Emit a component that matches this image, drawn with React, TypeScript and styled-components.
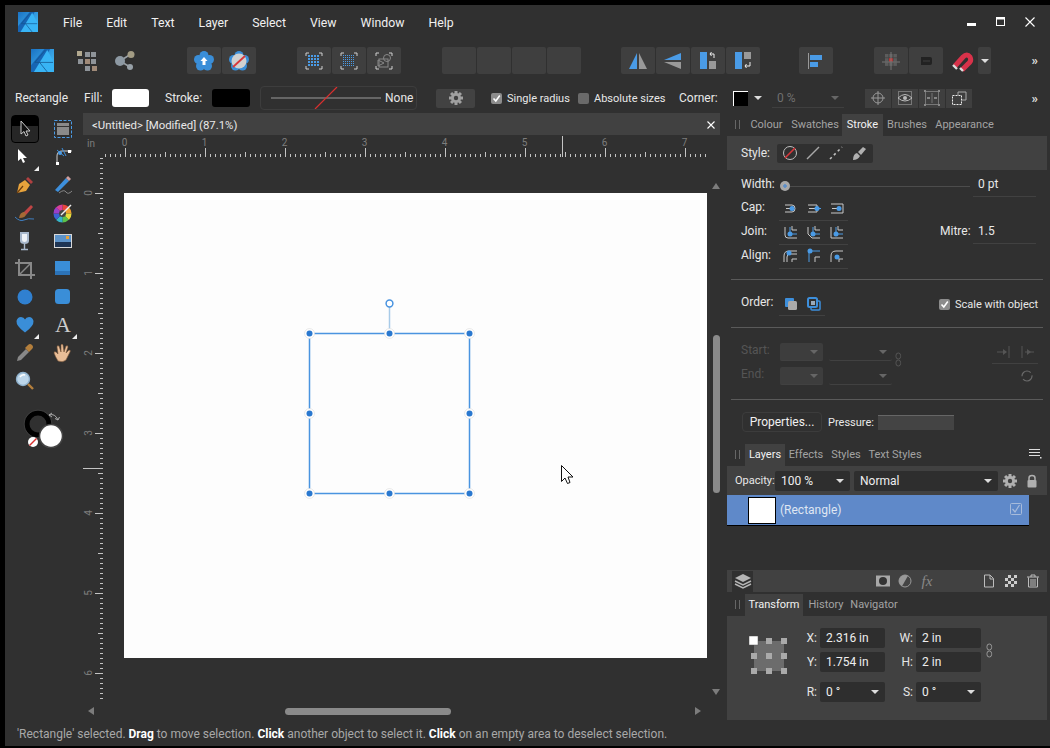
import React from "react";
import styled, { createGlobalStyle } from "styled-components";

const Global = createGlobalStyle`
  html, body { margin: 0; padding: 0; background: #000; overflow: hidden; }
  body { font-family: Roboto, "Liberation Sans", sans-serif; font-size: 12px; color: #e6e6e6; }
  * { box-sizing: border-box; }
`;

const Screen = styled.div`
  width: 1050px;
  height: 748px;
  padding: 5px 0 2px 5px;
  background: #000;
`;
const Frame = styled.div`
  height: 741px;
  display: flex;
  flex-direction: column;
  background: #303030;
`;

const TitleBar = styled.header`
  height: 39px;
  flex: none;
  display: flex;
  align-items: center;
  padding: 0 15px 6px 13px;
`;
const Menu = styled.nav`
  display: flex;
  gap: 24px;
  margin: 3px 0 0 25px;
  font-size: 12.3px;
  color: #f0f0f0;
`;
const WindowControls = styled.div`
  margin-left: auto;
  display: flex;
  gap: 19px;
  align-items: center;
`;

const Toolbar = styled.div`
  height: 36px;
  flex: none;
  display: flex;
  align-items: flex-start;
  padding-top: 3px;
`;
const Slot = styled.div<{ $ml?: number; $w?: number; $h?: number }>`
  margin-left: ${({ $ml }) => $ml ?? 0}px;
  width: ${({ $w }) => ($w ? `${$w}px` : "auto")};
  height: ${({ $h }) => $h ?? 27}px;
  flex: none;
  display: flex;
  align-items: center;
  justify-content: center;
`;
const BtnGroup = styled.div<{ $ml?: number }>`
  margin-left: ${({ $ml }) => $ml ?? 0}px;
  display: flex;
  gap: 1px;
  flex: none;
`;
const ToolBtn = styled.button<{ $w?: number }>`
  width: ${({ $w }) => $w ?? 34}px;
  height: 27px;
  padding: 0;
  border: 0;
  border-radius: 2px;
  background: #3f3f3f;
  display: flex;
  align-items: center;
  justify-content: center;
`;
const MoreGlyph = styled.span`
  margin-left: auto;
  margin-right: 12px;
  color: #ddd;
  font-size: 13px;
  line-height: 27px;
  font-weight: 700;
`;

const ContextBar = styled.div`
  height: 33px;
  flex: none;
  display: flex;
  align-items: center;
  padding: 3px 0 0 10px;
`;
const CtxLabel = styled.span<{ $w: number; $ml?: number; $small?: boolean }>`
  flex: none;
  width: ${({ $w }) => $w}px;
  margin-left: ${({ $ml }) => $ml ?? 0}px;
  font-size: ${({ $small }) => ($small ? 11 : 12)}px;
  color: #e8e8e8;
  white-space: nowrap;
`;
const Swatch = styled.div<{ $color: string; $w: number; $ml?: number }>`
  flex: none;
  width: ${({ $w }) => $w}px;
  height: 18px;
  margin-left: ${({ $ml }) => $ml ?? 0}px;
  background: ${({ $color }) => $color};
  border-radius: 3px;
`;
const LineSelect = styled.div`
  flex: none;
  width: 157px;
  height: 24px;
  margin-left: 10px;
  padding-left: 10px;
  display: flex;
  align-items: center;
  gap: 4px;
  border: 1px solid #3d3d3d;
  border-radius: 4px;
`;
const GearBtn = styled.button`
  flex: none;
  width: 39px;
  height: 19px;
  margin-left: 19px;
  padding: 0;
  border: 0;
  border-radius: 2px;
  background: #424242;
  display: flex;
  align-items: center;
  justify-content: center;
`;
const Check = styled.span<{ $on?: boolean; $ml?: number }>`
  flex: none;
  width: 11px;
  height: 11px;
  margin-left: ${({ $ml }) => $ml ?? 0}px;
  margin-right: 5px;
  border-radius: 2px;
  background: ${({ $on }) => ($on ? "#8c8c8c" : "#6a6a6a")};
  display: flex;
  align-items: center;
  justify-content: center;
`;
const CornerBox = styled.div`
  flex: none;
  width: 40px;
  height: 20px;
  padding-left: 8px;
  display: flex;
  align-items: center;
  gap: 6px;
`;
const CornerSwatch = styled.div`
  width: 15px;
  height: 15px;
  background: #000;
  border-left: 1px solid #fff;
  border-top: 1px solid #fff;
`;
const Caret = styled.span<{ $dim?: boolean }>`
  flex: none;
  width: 0;
  height: 0;
  border-left: 4px solid transparent;
  border-right: 4px solid transparent;
  border-top: 4px solid ${({ $dim }) => ($dim ? "#666" : "#ddd")};
`;
const PercentField = styled.div`
  flex: none;
  width: 72px;
  height: 20px;
  margin-left: 7px;
  padding: 0 5px;
  display: flex;
  align-items: center;
  justify-content: space-between;
  color: #6f6f6f;
  border-bottom: 1px solid #3f3f3f;
`;
const CtxGroup = styled.div`
  flex: none;
  margin-left: 21px;
  display: flex;
  gap: 1px;
`;
const CtxBtn = styled.div`
  width: 26px;
  height: 19px;
  background: #3f3f3f;
  display: flex;
  align-items: center;
  justify-content: center;
`;

const Body = styled.div`
  flex: 1;
  min-height: 0;
  display: flex;
`;

const ToolColumn = styled.aside`
  width: 78px;
  flex: none;
  padding: 2px 0 0 1px;
`;
const ToolGrid = styled.div`
  display: grid;
  grid-template-columns: 38px 38px;
  grid-auto-rows: 28px;
`;
const ToolCell = styled.div<{ $active?: boolean }>`
  position: relative;
  width: 28px;
  height: 28px;
  margin: 0 auto;
  display: flex;
  align-items: center;
  justify-content: center;
  border-radius: 4px;
  ${({ $active }) =>
    $active ? "background: linear-gradient(#000 0 40%, #262626 40%); border: 1px solid #000;" : ""}
`;
const CornerMark = styled.span`
  position: absolute;
  right: 0;
  bottom: 0;
  width: 0;
  height: 0;
  border-left: 5px solid transparent;
  border-bottom: 5px solid #eee;
`;
const ColourWell = styled.div`
  margin: 12px 0 0 15px;
`;

const Main = styled.main`
  width: 637px;
  flex: none;
  display: flex;
  flex-direction: column;
`;
const DocTab = styled.div`
  height: 22px;
  flex: none;
  padding: 1px 5px 0 9px;
  display: flex;
  align-items: center;
  justify-content: space-between;
  background: #414141;
  color: #e8e8e8;
  font-size: 11.4px;
`;
const Viewport = styled.div`
  position: relative;
  flex: 1;
  min-height: 0;
  display: grid;
  grid-template-columns: 41px 1fr;
  grid-template-rows: 22px 1fr;
  overflow: hidden;
`;
const TopRuler = styled.svg`
  grid-column: 1 / 3;
  display: block;
`;
const Page = styled.div`
  width: 583px;
  height: 465px;
  margin-top: 36px;
  background: #fdfdfd;
`;
const ScrollThumb = styled.div<{ $vertical?: boolean }>`
  position: absolute;
  background: #8a8a8a;
  border-radius: 4px;
  ${({ $vertical }) =>
    $vertical
      ? "left: 630px; top: 200px; width: 7px; height: 158px;"
      : "left: 202px; top: 573px; width: 166px; height: 7px;"}
`;
const ScrollArrow = styled.span<{ $x: number; $y: number }>`
  position: absolute;
  left: ${({ $x }) => $x}px;
  top: ${({ $y }) => $y}px;
  line-height: 0;
`;

const RightDock = styled.aside`
  width: 320px;
  margin-left: 7px;
  padding-bottom: 2px;
  flex: none;
  display: flex;
  flex-direction: column;
`;
const TabStrip = styled.div`
  height: 23px;
  flex: none;
  padding: 1px 0 0 18px;
  display: flex;
  position: relative;
  font-size: 11px;
`;
const Grip = styled.span`
  position: absolute;
  left: 8px;
  top: 7px;
  width: 5px;
  height: 9px;
  border-left: 1px solid #666;
  border-right: 1px solid #666;
`;
const Tab = styled.div<{ $active?: boolean; $w: number }>`
  width: ${({ $w }) => $w}px;
  flex: none;
  text-align: center;
  line-height: 22px;
  white-space: nowrap;
  background: ${({ $active }) => ($active ? "#414141" : "transparent")};
  color: ${({ $active }) => ($active ? "#f2f2f2" : "#a3a3a3")};
`;
const StyleBand = styled.div`
  height: 34px;
  flex: none;
  display: flex;
  align-items: center;
  padding-left: 14px;
  background: #414141;
`;
const StyleSegments = styled.div`
  margin-left: 7px;
  height: 19px;
  padding: 0 2px;
  background: #303030;
  border-radius: 2px;
  display: flex;
`;
const StyleSeg = styled.div`
  width: 23px;
  display: flex;
  align-items: center;
  justify-content: center;
`;
const StrokeBody = styled.div`
  padding-top: 5px;
  height: 273px;
  flex: none;
`;
const PropRow = styled.div<{ $off?: boolean; $h?: number }>`
  height: ${({ $h }) => $h ?? 24}px;
  padding-left: 14px;
  display: flex;
  align-items: center;
  color: ${({ $off }) => ($off ? "#555" : "#e8e8e8")};
`;
const PropLabel = styled.span<{ $w?: number; $ml?: number }>`
  flex: none;
  width: ${({ $w }) => $w ?? 38}px;
  margin-left: ${({ $ml }) => $ml ?? 0}px;
  padding-bottom: 4px;
  white-space: nowrap;
`;
const Slider = styled.div`
  flex: none;
  width: 190px;
  height: 12px;
  display: flex;
  align-items: center;
`;
const SliderKnob = styled.span`
  flex: none;
  width: 10px;
  height: 10px;
  border-radius: 50%;
  background: radial-gradient(#5d8fc9 0 1.5px, #a8a8a8 2px);
`;
const SliderTrack = styled.span`
  flex: 1;
  height: 1px;
  background: #4c4c4c;
`;
const ValueField = styled.div<{ $ml?: number }>`
  flex: none;
  width: 63px;
  height: 21px;
  margin-left: ${({ $ml }) => $ml ?? 0}px;
  padding: 0 5px 3px;
  display: flex;
  align-items: center;
  border-bottom: 1px solid #414141;
`;
const Segments = styled.div<{ $ml?: number }>`
  flex: none;
  display: flex;
  margin-left: ${({ $ml }) => $ml ?? 0}px;
  border-bottom: 1px solid #414141;
`;
const Seg = styled.div`
  width: 23px;
  height: 23px;
  display: flex;
  align-items: center;
  justify-content: center;
`;
const Separator = styled.hr<{ $mt: number; $mb: number }>`
  height: 1px;
  margin: ${({ $mt }) => $mt}px 4px ${({ $mb }) => $mb}px;
  border: 0;
  background: #5a5a5a;
`;
const DisabledSelect = styled.div<{ $w: number; $fill?: boolean; $ml?: number }>`
  flex: none;
  width: ${({ $w }) => $w}px;
  height: 18px;
  margin-left: ${({ $ml }) => $ml ?? 0}px;
  padding-right: 5px;
  display: flex;
  align-items: center;
  justify-content: flex-end;
  background: ${({ $fill }) => ($fill ? "#3d3d3d" : "transparent")};
  border-radius: 2px;
  border-bottom: 1px solid #414141;
`;
const PressureRow = styled.div`
  height: 20px;
  padding-left: 15px;
  display: flex;
  align-items: center;
`;
const PropertiesBtn = styled.div`
  flex: none;
  width: 80px;
  height: 20px;
  text-align: center;
  line-height: 19px;
  border: 1px solid #3c3c3c;
  border-radius: 4px;
  color: #f0f0f0;
`;
const PressureBar = styled.div`
  flex: none;
  width: 76px;
  height: 15px;
  background: #444;
  border-top: 1px solid #666;
`;

const LayersPanel = styled.section`
  height: 150px;
  padding-bottom: 1px;
  flex: none;
  display: flex;
  flex-direction: column;
`;
const MenuGlyph = styled.span`
  position: absolute;
  right: 5px;
  top: 3px;
  line-height: 0;
`;
const OpacityBand = styled.div`
  height: 29px;
  flex: none;
  padding-left: 8px;
  display: flex;
  align-items: center;
  background: #414141;
`;
const Combo = styled.div<{ $w: number; $ml?: number }>`
  flex: none;
  width: ${({ $w }) => $w}px;
  height: 20px;
  margin-left: ${({ $ml }) => $ml ?? 0}px;
  padding: 0 6px;
  display: flex;
  align-items: center;
  justify-content: space-between;
  background: #2e2e2e;
  border-radius: 2px;
  color: #eee;
`;
const LayerRow = styled.div`
  width: 302px;
  height: 31px;
  flex: none;
  padding: 2px 6px 0 21px;
  display: flex;
  align-items: flex-start;
  background: #5f89c9;
  border-bottom: 1px solid #000;
`;
const LayerThumb = styled.div`
  width: 28px;
  height: 27px;
  background: #fff;
  border: 1px solid #000;
`;
const LayerName = styled.span`
  margin: 6px 0 0 4px;
  color: #dfe6f2;
`;
const LayerVisible = styled.span`
  margin: 5px 0 0 auto;
  line-height: 0;
`;
const LayerGap = styled.div`
  flex: 1;
`;
const LayerFooter = styled.div`
  height: 22px;
  flex: none;
  padding-left: 5px;
  display: flex;
  align-items: center;
  background: #414141;
`;
const StackBtn = styled.div`
  width: 21px;
  height: 21px;
  background: #303030;
  display: flex;
  align-items: center;
  justify-content: center;
`;
const FooterIcon = styled.span<{ $ml: number }>`
  width: 16px;
  height: 16px;
  margin-left: ${({ $ml }) => $ml}px;
  display: flex;
  align-items: center;
  justify-content: center;
  flex: none;
`;
const FxMark = styled.span`
  font-family: "Liberation Serif", serif;
  font-style: italic;
  font-size: 15px;
  color: #888;
`;

const TransformBody = styled.div`
  flex: 1;
  padding-top: 12px;
  display: flex;
  align-items: flex-start;
  background: #414141;
`;
const AnchorWrap = styled.div`
  width: 73px;
  padding: 8px 0 0 22px;
  flex: none;
  line-height: 0;
`;
const TransformGrid = styled.div`
  display: grid;
  grid-template-columns: 17px 65px 25px 65px;
  grid-template-rows: 20px 20px 20px;
  row-gap: 4px;
  column-gap: 3px;
`;
const AxisLabel = styled.span<{ $gapTop?: boolean }>`
  text-align: right;
  line-height: 20px;
  ${({ $gapTop }) => ($gapTop ? "transform: translateY(6px);" : "")}
`;
const AxisField = styled.div<{ $gapTop?: boolean }>`
  padding: 0 6px;
  display: flex;
  align-items: center;
  justify-content: space-between;
  background: #2e2e2e;
  border-radius: 2px;
  color: #eee;
  ${({ $gapTop }) => ($gapTop ? "transform: translateY(6px);" : "")}
`;
const LinkWrap = styled.div<{ $mt: number; $ml: number }>`
  margin: ${({ $mt }) => $mt}px 0 0 ${({ $ml }) => $ml}px;
  line-height: 0;
`;

const StatusBar = styled.footer`
  height: 24px;
  flex: none;
  padding-left: 12px;
  display: flex;
  align-items: center;
  color: #a8a8a8;
  white-space: pre;
  b {
    color: #fff;
  }
`;

function Icon({ s = 16, h, children }: { s?: number; h?: number; children: React.ReactNode }) {
  return (
    <svg width={s} height={h ?? s} viewBox={`0 0 ${s} ${h ?? s}`} fill="none" style={{ display: "block" }}>
      {children}
    </svg>
  );
}

function AffinityLogo({ s }: { s: number }) {
  return (
    <svg width={s} height={s} viewBox="0 0 24 24" style={{ display: "block", flex: "none" }}>
      <defs>
        <linearGradient id="afd" x1="0" y1="0" x2="1" y2="1">
          <stop offset="0" stopColor="#1a72c4" />
          <stop offset="1" stopColor="#4cc4fa" />
        </linearGradient>
      </defs>
      <rect width="24" height="24" fill="url(#afd)" />
      <path d="M0 24 0 17 14 0H20L5 24Z" fill="#1765b4" />
      <path d="M3 24 17 1 24 14V24Z" fill="#38b4f5" />
      <path d="M4 14H23M9 14 17 24M4 14 15 1" stroke="#14558f" strokeWidth="0.8" fill="none" />
    </svg>
  );
}

function GridApps() {
  const cells: [number, number, string][] = [
    [0, 0, "#b3a98f"], [8, 1, "#8f9499"], [14, 1, "#8f9499"],
    [1, 8, "#8f9499"], [8, 8, "#a08a78"], [14, 8, "#8f9499"],
    [8, 15, "#8f9499"], [15, 15, "#a08a78"],
  ];
  return (
    <Icon s={20}>
      {cells.map(([x, y, c], i) => (
        <rect key={i} x={x} y={y} width="5" height="5" fill={c} />
      ))}
    </Icon>
  );
}

function ShareIcon() {
  return (
    <Icon s={20}>
      <path d="M5 10 16 3M5 10 15 16" stroke="#9aa0a5" strokeWidth="1.5" />
      <circle cx="5" cy="10" r="5" fill="#8d99a3" />
      <circle cx="16" cy="3.5" r="3.5" fill="#a39c84" />
      <circle cx="15" cy="16" r="3" fill="#98a1a8" />
    </Icon>
  );
}

function Flower({ slash }: { slash?: boolean }) {
  const lobes = [[10, 4.5], [15.5, 8.5], [13.5, 15], [6.5, 15], [4.5, 8.5]];
  return (
    <Icon s={20}>
      {lobes.map(([x, y], i) => (
        <circle key={i} cx={x} cy={y} r="4.5" fill="#3a8ed8" />
      ))}
      {slash ? <circle cx="10" cy="10" r="7.5" fill="#d0d0d0" /> : <circle cx="10" cy="10" r="6" fill="#3a8ed8" />}
      {slash ? (
        <path d="M4 16 16 5" stroke="#d8363a" strokeWidth="1.8" />
      ) : (
        <path d="M10 6 13.5 10H11.5V14H8.5V10H6.5Z" fill="#fff" />
      )}
    </Icon>
  );
}

function Brackets() {
  return <path d="M1 4V1H4M14 1H17V4M17 14V17H14M4 17H1V14" stroke="#d0d0d0" strokeWidth="1" />;
}

function SnapGrid({ dense }: { dense?: boolean }) {
  const step = dense ? 2 : 3;
  const dots: [number, number][] = [];
  for (let x = 4; x < 15; x += step) for (let y = 4; y < 15; y += step) dots.push([x, y]);
  return (
    <Icon s={18}>
      <Brackets />
      {dots.map(([x, y], i) => (
        <rect key={i} x={x - 1} y={y - 1} width={dense ? 1 : 2} height={dense ? 1 : 2} fill="#4a9be6" />
      ))}
    </Icon>
  );
}

function SnapShapes() {
  return (
    <Icon s={18}>
      <Brackets />
      <rect x="4" y="7" width="9" height="8" stroke="#888" />
      <circle cx="12" cy="6" r="3.5" stroke="#888" />
      <path d="M3 8 9 11 3 14Z" stroke="#888" />
    </Icon>
  );
}

function FlipH() {
  return (
    <Icon s={20}>
      <path d="M9 2V18H1Z" fill="#4a9be6" />
      <path d="M11 2V18H19Z" fill="#999" />
    </Icon>
  );
}
function FlipV() {
  return (
    <Icon s={20}>
      <path d="M18 2V9H1Z" fill="#4a9be6" />
      <path d="M18 18V11H1Z" fill="#999" />
    </Icon>
  );
}
function RotateLeft() {
  return (
    <Icon s={20}>
      <rect x="2" y="1" width="7" height="17" fill="#4a9be6" />
      <rect x="11" y="10" width="7" height="8" fill="#999" />
      <path d="M16 7V3H12M13.5 1 12 3 13.5 5" stroke="#eee" />
    </Icon>
  );
}
function RotateRight() {
  return (
    <Icon s={20}>
      <rect x="2" y="1" width="7" height="17" fill="#4a9be6" />
      <rect x="11" y="1" width="7" height="7" fill="#999" />
      <path d="M17 11V15H12M13.5 13 12 15 13.5 17" stroke="#eee" />
    </Icon>
  );
}
function AlignLeft() {
  return (
    <Icon s={18}>
      <path d="M1.5 1V17" stroke="#999" />
      <rect x="3" y="3" width="12" height="5" fill="#4a9be6" />
      <rect x="3" y="10" width="8" height="5" fill="#4a9be6" />
    </Icon>
  );
}
function SnapRed() {
  const cells: [number, number][] = [];
  for (let x = 0; x < 3; x++) for (let y = 0; y < 3; y++) cells.push([x, y]);
  return (
    <Icon s={18}>
      {cells.map(([x, y], i) => (
        <rect key={i} x={3 + x * 4.2} y={2 + y * 4.2} width="3.5" height="3.5" fill={x === 1 && y === 1 ? "#e03030" : "#5c5c5c"} />
      ))}
      <path d="M0 10H18M9 0V18" stroke="#777" />
    </Icon>
  );
}
function DimSnap() {
  return (
    <Icon s={18}>
      <path d="M4 5H13Q15 5 15 7V11Q15 13 13 13H4Z" fill="#222" />
      <path d="M6 9H13" stroke="#3f3f3f" />
    </Icon>
  );
}
function Magnet() {
  return (
    <Icon s={24}>
      <path d="M5 17 13 8Q17 4 20 8 22 12 18 15L12 21" stroke="#d8324a" strokeWidth="5" />
      <path d="M3 16 7 20M10 19 13 22" stroke="#ddd" strokeWidth="2.4" />
    </Icon>
  );
}
function Gear({ c = "#a0a0a0" }: { c?: string }) {
  const teeth = [0, 45, 90, 135];
  return (
    <Icon s={16}>
      {teeth.map((a) => (
        <rect key={a} x="6.5" y="1" width="3" height="14" fill={c} transform={`rotate(${a} 8 8)`} />
      ))}
      <circle cx="8" cy="8" r="5" fill={c} />
      <circle cx="8" cy="8" r="2.2" fill="#404040" />
    </Icon>
  );
}
function Tick({ c = "#fff" }: { c?: string }) {
  return (
    <svg width="9" height="9" viewBox="0 0 9 9" style={{ display: "block" }}>
      <path d="M1.5 4.5 3.8 7 7.8 1.5" stroke={c} strokeWidth="1.6" fill="none" />
    </svg>
  );
}
function WinMin() {
  return <Icon s={10}><rect x="0" y="6" width="9" height="3" fill="#fff" /></Icon>;
}
function WinMax() {
  return <Icon s={10}><rect x="0.5" y="0.5" width="8" height="8" stroke="#fff" /><rect x="0" y="0" width="9" height="2.5" fill="#fff" /></Icon>;
}
function WinClose({ s = 10 }: { s?: number }) {
  return <Icon s={s}><path d={`M0.5 0.5 ${s - 0.5} ${s - 0.5}M${s - 0.5} 0.5 0.5 ${s - 0.5}`} stroke="#fff" strokeWidth="1.1" /></Icon>;
}

const Sq = ({ x, y }: { x: number; y: number }) => <rect x={x} y={y} width="2" height="2" fill="#888" />;

function CtxIcon({ kind }: { kind: number }) {
  return (
    <Icon s={16}>
      {kind === 0 && (
        <>
          <circle cx="8" cy="8" r="5" stroke="#999" />
          <path d="M8 1V15M1 8H15" stroke="#999" />
        </>
      )}
      {kind === 1 && (
        <>
          <rect x="1.5" y="1.5" width="13" height="13" stroke="#777" />
          <path d="M1 8Q8 1 15 8 8 14 1 8Z" stroke="#bbb" />
          <circle cx="8" cy="8" r="2" fill="#bbb" />
        </>
      )}
      {kind === 2 && (
        <>
          <rect x="1.5" y="1.5" width="13" height="13" stroke="#777" />
          <path d="M8 3V13" stroke="#777" />
          <path d="M3 8H6M13 8H10" stroke="#ccc" />
          <Sq x={0} y={0} /><Sq x={14} y={0} /><Sq x={0} y={14} /><Sq x={14} y={14} />
        </>
      )}
      {kind === 3 && (
        <>
          <rect x="1.5" y="5.5" width="9" height="9" stroke="#eee" strokeDasharray="2 1" />
          <path d="M7 5V2H15V10H11" stroke="#aaa" />
        </>
      )}
    </Icon>
  );
}

const BLUE = "#4a9be6";
const GREY = "#c8c8c8";

function CapIcon({ kind }: { kind: number }) {
  const body = ["M2 5H9Q12 5 12 8.5 12 12 9 12H2", "M2 5H11V12H2", "M2 4H14V13H2"][kind];
  const dot = [9, 11, 10][kind];
  return (
    <Icon s={16} h={17}>
      <path d={body} stroke={GREY} />
      <path d={`M3 8.5H${dot}`} stroke={GREY} />
      {kind === 1 && <path d="M11 8.5H15" stroke={BLUE} />}
      <circle cx={dot} cy="8.5" r="2.5" fill={BLUE} />
    </Icon>
  );
}
function JoinIcon({ kind }: { kind: number }) {
  const outer = ["M2 3V11Q2 14 5 14H14", "M2 3V10L6 14H14", "M2 3V14H14"][kind];
  return (
    <Icon s={16} h={17}>
      <path d={outer} stroke={GREY} />
      <path d="M9 2V6H14" stroke={GREY} />
      <path d="M7 3V10M7 10H14" stroke={BLUE} />
      <circle cx="7" cy="10" r="2.5" fill={BLUE} />
    </Icon>
  );
}
function AlignIcon({ kind }: { kind: number }) {
  return (
    <Icon s={16} h={17}>
      {kind === 0 && <path d="M1 14V8Q1 3 6 3H14M4 14V9Q4 6 7 6H14M9 14V11H14" stroke={GREY} />}
      {kind === 0 && <circle cx="6" cy="5" r="2.5" fill={BLUE} />}
      {kind === 1 && <path d="M3 14V3H14" stroke={BLUE} />}
      {kind === 1 && <path d="M9 14V9H14" stroke={GREY} />}
      {kind === 1 && <circle cx="4" cy="3" r="2.5" fill={BLUE} />}
      {kind === 2 && <path d="M2 14V8Q2 3 7 3H14M10 14V11H14" stroke={GREY} />}
      {kind === 2 && <circle cx="8" cy="9" r="2.5" fill={BLUE} />}
    </Icon>
  );
}
function OrderIcon({ front }: { front?: boolean }) {
  return (
    <Icon s={16}>
      {front ? (
        <>
          <rect x="2" y="2" width="9" height="9" rx="1" fill="#3d8fdc" />
          <rect x="5" y="5" width="9" height="9" rx="1.5" fill="#aaa" />
        </>
      ) : (
        <>
          <rect x="5" y="5" width="9" height="9" rx="1" stroke="#3d8fdc" strokeWidth="1.5" />
          <rect x="2" y="2" width="9" height="9" rx="1.5" fill="#303030" stroke="#3d8fdc" strokeWidth="2" />
          <rect x="5" y="5" width="4" height="4" fill="#9ab" />
        </>
      )}
    </Icon>
  );
}
function StyleIcon({ kind }: { kind: number }) {
  return (
    <Icon s={16}>
      {kind === 0 && (
        <>
          <circle cx="8" cy="8" r="6.5" stroke="#c0c0c0" />
          <path d="M3 13 13 3" stroke="#d8363a" strokeWidth="1.6" />
        </>
      )}
      {kind === 1 && <path d="M2 14 14 2" stroke="#a8a8a8" strokeWidth="1.4" />}
      {kind === 2 && <path d="M2 14 14 2" stroke="#c0c0c0" strokeWidth="1.6" strokeDasharray="2.5 3" />}
      {kind === 3 && (
        <>
          <path d="M2 15Q2 9 6 8L9 11Q7 15 2 15Z" fill="#b0b0b0" />
          <path d="M7 7 12 2 15 4 10 10Z" fill="#b0b0b0" />
        </>
      )}
    </Icon>
  );
}
function ChainIcon({ c }: { c: string }) {
  return (
    <Icon s={7} h={15}>
      <rect x="1" y="1" width="4.6" height="6" rx="2.3" stroke={c} />
      <rect x="1" y="8" width="4.6" height="6" rx="2.3" stroke={c} />
    </Icon>
  );
}
function Arrowhead({ side }: { side: "left" | "right" | "up" | "down" }) {
  const d = { left: "M0 4 6 0V8Z", right: "M6 4 0 0V8Z", up: "M4 0 8 6H0Z", down: "M4 6 8 0H0Z" }[side];
  return (
    <svg width="8" height="8" viewBox="0 0 8 8" style={{ display: "block" }}>
      <path d={d} fill="#7c7c7c" />
    </svg>
  );
}

function ToolGlyph({ name }: { name: string }) {
  switch (name) {
    case "move":
      return <Icon s={18}><path d="M5 1V14L8 11.5 10 16 12 15 10 11H14Z" stroke="#ccc" fill="#111" /></Icon>;
    case "artboard":
      return (
        <Icon s={20}>
          <rect x="1.5" y="1.5" width="17" height="17" stroke={BLUE} strokeDasharray="3 1.5" />
          <rect x="4" y="4" width="12" height="12" fill="#8a8a8a" />
          <rect x="4" y="7" width="12" height="1" fill="#333" />
        </Icon>
      );
    case "node":
      return <Icon s={18}><path d="M2 1V13L5 10.5 7 15 9 14 7 10H11Z" fill="#fff" /></Icon>;
    case "curve":
      return (
        <Icon s={20}>
          <path d="M4 18V9Q4 4 9 4H19" stroke="#ccc" />
          <path d="M9 1 13 9M4 3 11 9" stroke="#3d8fdc" />
          <circle cx="7" cy="6" r="2" fill={BLUE} />
          <rect x="15" y="3" width="3" height="3" fill="#fff" />
          <rect x="3" y="15" width="3" height="3" fill="#fff" />
        </Icon>
      );
    case "pen":
      return (
        <Icon s={20}>
          <path d="M2 18 4 9 10 5 15 10 11 16Z" fill="#e8a33c" />
          <path d="M2 18 8 11" stroke="#6b3d10" strokeWidth="1.2" />
          <path d="M11 4 13 2 18 7 16 9Z" fill="#b04040" />
        </Icon>
      );
    case "pencil":
      return (
        <Icon s={20}>
          <path d="M2 15 13 3 16 6 5 17Z" fill="#3d8fdc" />
          <path d="M13 3 15 1 18 4 16 6Z" fill="#d0a0a0" />
          <path d="M6 18Q11 14 13 17T19 16" stroke="#888" />
        </Icon>
      );
    case "brush":
      return (
        <Icon s={22}>
          <path d="M9 11 17 3 19 5 12 13Z" fill="#c04545" />
          <path d="M5 16Q6 10 10 10L12 12Q12 16 5 16Z" fill="#a56a35" />
          <path d="M1 15Q6 20 10 18T20 17" stroke="#3f7ec0" />
        </Icon>
      );
    case "wheel":
      return (
        <svg width="20" height="20" viewBox="0 0 20 20" style={{ display: "block" }}>
          {["#e8473b", "#f0a030", "#e6dc3c", "#5cc24a", "#35b5c9", "#3b62d4", "#9a3fc9", "#d83f9a"].map((c, i) => (
            <path key={c} d="M9.5 10.5 9.5 1.5A9 9 0 0 1 15.9 4.1Z" fill={c} transform={`rotate(${i * 45} 9.5 10.5)`} />
          ))}
          <circle cx="9.5" cy="10.5" r="3.5" fill="#444" />
          <path d="M8 12 18 2" stroke="#eee" strokeWidth="1.5" />
        </svg>
      );
    case "glass":
      return (
        <Icon s={20}>
          <path d="M5 1H14V10Q14 13 9.5 13 5 13 5 10Z" fill="#a8b8cc" />
          <path d="M7 3H12V9Q12 11 9.5 11 7 11 7 9Z" fill="#eef2f7" />
          <path d="M9.5 13V18M6 18.5H13" stroke="#a8b8cc" strokeWidth="1.4" />
        </Icon>
      );
    case "picture":
      return (
        <Icon s={20}>
          <rect x="1" y="3" width="18" height="14" fill="#d8d8d8" />
          <rect x="2" y="4" width="16" height="12" fill="#5d93c9" />
          <rect x="2" y="11" width="16" height="5" fill="#1f3554" />
          <rect x="13" y="5" width="3" height="3" fill="#e8a33c" />
        </Icon>
      );
    case "crop":
      return (
        <Icon s={20}>
          <path d="M4 0V16H20M0 4H16V20" stroke="#888" strokeWidth="2" />
          <path d="M4 16 16 4" stroke="#888" strokeWidth="1.5" />
        </Icon>
      );
    case "square":
      return (
        <Icon s={16}>
          <rect width="15" height="14" fill="#3a8ed8" />
          <rect y="10" width="15" height="4" fill="#2c73b8" />
        </Icon>
      );
    case "circle":
      return <Icon s={16}><circle cx="8" cy="8" r="7.5" fill="#3080d0" /></Icon>;
    case "rounded":
      return <Icon s={16}><rect width="15" height="15" rx="3.5" fill="#3a8ed8" /></Icon>;
    case "heart":
      return <Icon s={18}><path d="M9 16.5Q0 10 0.5 5 1.5 1 5 1 8 1 9 3.5 10 1 13 1 16.5 1 17.5 5 18 10 9 16.5Z" fill="#3a8ed8" /></Icon>;
    case "picker":
      return (
        <Icon s={20}>
          <path d="M2 18 3 14 11 6 14 9 6 17Z" fill="#888" />
          <path d="M10 5 13 2Q15 0 17 2 19 4 17 6L14 9Z" fill="#b47f3c" />
        </Icon>
      );
    case "hand":
      return (
        <Icon s={20}>
          <path d="M5 18Q2 13 1 10 1 8 3 9L5 11 4 4Q4 2 6 3L8 9 8 2Q9 0 10 2L11 9 13 3Q15 2 15 4L13 10 16 7Q18 7 17 9L13 17Q10 20 5 18Z" fill="#e8bd97" stroke="#7b5537" strokeWidth="0.6" />
        </Icon>
      );
    case "zoom":
      return (
        <Icon s={20}>
          <circle cx="8" cy="8" r="6.5" fill="#bcd6ea" stroke="#8fb1cc" strokeWidth="1.4" />
          <path d="M5 6Q7 3 10 4" stroke="#fff" strokeWidth="1.4" />
          <path d="M13 13 18 18" stroke="#b47f3c" strokeWidth="2.4" />
        </Icon>
      );
    default:
      return null;
  }
}

const ArtText = styled.span`
  font-family: "Liberation Serif", serif;
  font-size: 22px;
  line-height: 1;
  color: #ccc;
`;

const tools: { name: string; mark?: boolean }[] = [
  { name: "move" }, { name: "artboard" },
  { name: "node", mark: true }, { name: "curve" },
  { name: "pen" }, { name: "pencil" },
  { name: "brush" }, { name: "wheel" },
  { name: "glass" }, { name: "picture" },
  { name: "crop" }, { name: "square" },
  { name: "circle" }, { name: "rounded" },
  { name: "heart", mark: true }, { name: "text", mark: true },
  { name: "picker" }, { name: "hand" },
  { name: "zoom" },
];

function HorizontalRuler() {
  const origin = 41.5;
  const ticks: React.ReactNode[] = [];
  for (let x = 22; x <= 622; x += 5) {
    const major = (x - 42 + 400) % 80 === 0;
    const mid = (x - 42 + 400) % 40 === 0;
    ticks.push(
      <line key={x} x1={x + 0.5} x2={x + 0.5} y1={major ? 13 : mid ? 17 : 19} y2={22} stroke="#c4c4c4" />
    );
  }
  return (
    <TopRuler width="637" height="22" viewBox="0 0 637 22">
      {ticks}
      {[0, 1, 2, 3, 4, 5, 6, 7].map((i) => (
        <text key={i} x={origin + i * 80} y="11" fontSize="10" fill="#7d7d7d" textAnchor="middle" fontFamily="Roboto, sans-serif">
          {i}
        </text>
      ))}
      <text x="4" y="12" fontSize="10" fill="#7d7d7d" fontFamily="Roboto, sans-serif">in</text>
      <line x1="479.5" x2="479.5" y1="1" y2="22" stroke="#c4c4c4" />
    </TopRuler>
  );
}

function VerticalRuler() {
  const ticks: React.ReactNode[] = [];
  for (let y = 1; y <= 541; y += 5) {
    const major = (y + 400 - 36) % 80 === 0;
    const mid = (y + 400 - 36) % 40 === 0;
    ticks.push(
      <line key={y} x1={major ? 12 : mid ? 15 : 17} x2={20} y1={y + 0.5} y2={y + 0.5} stroke="#c4c4c4" />
    );
  }
  return (
    <svg width="41" height="545" viewBox="0 0 41 545" style={{ display: "block" }}>
      {ticks}
      {[0, 1, 2, 3, 4, 5, 6].map((i) => (
        <text key={i} x="0" y="0" fontSize="10" fill="#7d7d7d" textAnchor="middle" fontFamily="Roboto, sans-serif"
          transform={`translate(9 ${36 + i * 80}) rotate(-90)`}>
          {i}
        </text>
      ))}
      <line x1="0" x2="20" y1="311.5" y2="311.5" stroke="#c4c4c4" />
    </svg>
  );
}

function SelectionOverlay() {
  const L = 185.5, T = 140.5, S = 160;
  const handles = [
    [L, T], [L + S / 2, T], [L + S, T],
    [L, T + S / 2], [L + S, T + S / 2],
    [L, T + S], [L + S / 2, T + S], [L + S, T + S],
  ];
  return (
    <svg width="583" height="465" viewBox="0 0 583 465" style={{ display: "block" }}>
      <rect x={L} y={T} width={S} height={S} fill="none" stroke="#4a94e0" strokeWidth="1.5" />
      <line x1={L + S / 2} x2={L + S / 2} y1={T - 27} y2={T} stroke="#a8cbe8" strokeWidth="1.5" />
      <circle cx={L + S / 2} cy={T - 30} r="3.4" fill="#fff" stroke="#4a94e0" strokeWidth="1.5" />
      {handles.map(([x, y], i) => (
        <g key={i}>
          <circle cx={x} cy={y} r="5" fill="#fdfdfd" stroke="#ddd" strokeWidth="0.6" />
          <circle cx={x} cy={y} r="3" fill="#2a78cf" />
        </g>
      ))}
      <path d="M437.5 272.5V288.5L441 285 443.5 290.5 446 289.5 444 284H449Z" fill="#fff" stroke="#111" />
    </svg>
  );
}

function AnchorGrid() {
  const pts = [0, 15, 30];
  return (
    <Icon s={38}>
      <rect x="5" y="5" width="30" height="30" fill="#6c6c6c" />
      {pts.flatMap((y) =>
        pts.map((x) => <rect key={`${x}-${y}`} x={x + 2} y={y + 2} width="6" height="6" fill="#aaa" />)
      )}
      <rect x="0" y="0" width="9" height="9" fill="#fff" stroke="#555" strokeWidth="0.5" />
    </Icon>
  );
}

export default function App() {
  return (
    <Screen>
      <Global />
      <Frame>
        <TitleBar>
          <AffinityLogo s={20} />
          <Menu>
            {["File", "Edit", "Text", "Layer", "Select", "View", "Window", "Help"].map((m) => (
              <span key={m}>{m}</span>
            ))}
          </Menu>
          <WindowControls>
            <WinMin />
            <WinMax />
            <WinClose />
          </WindowControls>
        </TitleBar>

        <Toolbar>
          <Slot $ml={26} $w={23}><AffinityLogo s={23} /></Slot>
          <Slot $ml={23} $w={20}><GridApps /></Slot>
          <Slot $ml={18} $w={20}><ShareIcon /></Slot>
          <BtnGroup $ml={52}>
            <ToolBtn><Flower /></ToolBtn>
            <ToolBtn><Flower slash /></ToolBtn>
          </BtnGroup>
          <BtnGroup $ml={41}>
            <ToolBtn><SnapGrid /></ToolBtn>
            <ToolBtn><SnapGrid dense /></ToolBtn>
            <ToolBtn><SnapShapes /></ToolBtn>
          </BtnGroup>
          <BtnGroup $ml={41}>
            <ToolBtn /><ToolBtn /><ToolBtn /><ToolBtn />
          </BtnGroup>
          <BtnGroup $ml={40}>
            <ToolBtn><FlipH /></ToolBtn>
            <ToolBtn><FlipV /></ToolBtn>
            <ToolBtn><RotateLeft /></ToolBtn>
            <ToolBtn><RotateRight /></ToolBtn>
          </BtnGroup>
          <BtnGroup $ml={39}>
            <ToolBtn><AlignLeft /></ToolBtn>
          </BtnGroup>
          <BtnGroup $ml={41}>
            <ToolBtn><SnapRed /></ToolBtn>
            <ToolBtn><DimSnap /></ToolBtn>
          </BtnGroup>
          <Slot $ml={7} $w={24}><Magnet /></Slot>
          <BtnGroup $ml={4}>
            <ToolBtn $w={13}><Caret /></ToolBtn>
          </BtnGroup>
          <MoreGlyph>»</MoreGlyph>
        </Toolbar>

        <ContextBar>
          <CtxLabel $w={69}>Rectangle</CtxLabel>
          <CtxLabel $w={28}>Fill:</CtxLabel>
          <Swatch $color="#fff" $w={37} />
          <CtxLabel $w={47} $ml={16}>Stroke:</CtxLabel>
          <Swatch $color="#000" $w={38} />
          <LineSelect>
            <svg width="110" height="22" viewBox="0 0 110 22" style={{ flex: "none" }}>
              <line x1="0" x2="110" y1="11" y2="11" stroke="#9a9a9a" />
              <line x1="44" x2="66" y1="22" y2="0" stroke="#d8302f" strokeWidth="1.2" />
            </svg>
            <span>None</span>
          </LineSelect>
          <GearBtn><Gear /></GearBtn>
          <Check $on $ml={16}><Tick /></Check>
          <CtxLabel $w={71} $small>Single radius</CtxLabel>
          <Check />
          <CtxLabel $w={85} $small>Absolute sizes</CtxLabel>
          <CtxLabel $w={46}>Corner:</CtxLabel>
          <CornerBox><CornerSwatch /><Caret /></CornerBox>
          <PercentField><span>0 %</span><Caret $dim /></PercentField>
          <CtxGroup>
            {[0, 1, 2, 3].map((k) => (
              <CtxBtn key={k}><CtxIcon kind={k} /></CtxBtn>
            ))}
          </CtxGroup>
          <MoreGlyph>»</MoreGlyph>
        </ContextBar>

        <Body>
          <ToolColumn>
            <ToolGrid>
              {tools.map((t, i) => (
                <ToolCell key={t.name} $active={i === 0}>
                  {t.name === "text" ? <ArtText>A</ArtText> : <ToolGlyph name={t.name} />}
                  {t.mark && <CornerMark />}
                </ToolCell>
              ))}
            </ToolGrid>
            <ColourWell>
              <svg width="46" height="44" viewBox="0 0 46 44" style={{ display: "block" }}>
                <circle cx="17" cy="17" r="11" fill="none" stroke="#000" strokeWidth="5" />
                <circle cx="17" cy="17" r="14" fill="none" stroke="#3c3c3c" />
                <circle cx="30" cy="29" r="11.5" fill="#fff" stroke="#444" strokeWidth="1.5" />
                <circle cx="12" cy="35" r="5" fill="#fff" />
                <path d="M8.5 38.5 15.5 31.5" stroke="#d8302f" strokeWidth="1.5" />
                <path d="M28 8Q34 6 37 13M28 8 31 6M28 8 31 10M37 13 34 11.5M37 13 38.5 10" fill="none" stroke="#aaa" />
              </svg>
            </ColourWell>
          </ToolColumn>

          <Main>
            <DocTab>
              <span>&lt;Untitled&gt; [Modified] (87.1%)</span>
              <WinClose s={8} />
            </DocTab>
            <Viewport>
              <HorizontalRuler />
              <VerticalRuler />
              <Page><SelectionOverlay /></Page>
              <ScrollThumb $vertical />
              <ScrollThumb />
              <ScrollArrow $x={629} $y={48}><Arrowhead side="up" /></ScrollArrow>
              <ScrollArrow $x={629} $y={554}><Arrowhead side="down" /></ScrollArrow>
              <ScrollArrow $x={5} $y={572}><Arrowhead side="left" /></ScrollArrow>
              <ScrollArrow $x={612} $y={572}><Arrowhead side="right" /></ScrollArrow>
            </Viewport>
          </Main>

          <RightDock>
            <TabStrip>
              <Grip />
              <Tab $w={43}>Colour</Tab>
              <Tab $w={54}>Swatches</Tab>
              <Tab $active $w={41}>Stroke</Tab>
              <Tab $w={48}>Brushes</Tab>
              <Tab $w={67}>Appearance</Tab>
            </TabStrip>
            <StyleBand>
              <span>Style:</span>
              <StyleSegments>
                {[0, 1, 2, 3].map((k) => (
                  <StyleSeg key={k}><StyleIcon kind={k} /></StyleSeg>
                ))}
              </StyleSegments>
            </StyleBand>
            <StrokeBody>
              <PropRow $h={22}>
                <PropLabel $w={39}>Width:</PropLabel>
                <Slider><SliderKnob /><SliderTrack /></Slider>
                <ValueField $ml={3}>0 pt</ValueField>
              </PropRow>
              <PropRow>
                <PropLabel>Cap:</PropLabel>
                <Segments>{[0, 1, 2].map((k) => <Seg key={k}><CapIcon kind={k} /></Seg>)}</Segments>
              </PropRow>
              <PropRow>
                <PropLabel>Join:</PropLabel>
                <Segments>{[0, 1, 2].map((k) => <Seg key={k}><JoinIcon kind={k} /></Seg>)}</Segments>
                <PropLabel $w={33} $ml={92}>Mitre:</PropLabel>
                <ValueField>1.5</ValueField>
              </PropRow>
              <PropRow>
                <PropLabel>Align:</PropLabel>
                <Segments>{[0, 1, 2].map((k) => <Seg key={k}><AlignIcon kind={k} /></Seg>)}</Segments>
              </PropRow>
              <Separator $mt={10} $mb={12} />
              <PropRow>
                <PropLabel>Order:</PropLabel>
                <Segments>
                  <Seg><OrderIcon front /></Seg>
                  <Seg><OrderIcon /></Seg>
                </Segments>
                <Check $on $ml={114}><Tick /></Check>
                <CtxLabel $w={84} $small>Scale with object</CtxLabel>
              </PropRow>
              <Separator $mt={11} $mb={12} />
              <PropRow $off>
                <PropLabel>Start:</PropLabel>
                <DisabledSelect $w={43} $fill $ml={1}><Caret $dim /></DisabledSelect>
                <DisabledSelect $w={63} $ml={6}><Caret $dim /></DisabledSelect>
                <LinkWrap $mt={14} $ml={3}><ChainIcon c="#555" /></LinkWrap>
                <Segments $ml={90}>
                  <Seg>
                    <Icon s={16}><path d="M1 8H10M13 2V14" stroke="#555" /><path d="M7 5 11 8 7 11Z" fill="#555" /></Icon>
                  </Seg>
                  <Seg>
                    <Icon s={16}><path d="M6 8H15M3 2V14" stroke="#555" /><path d="M8 5 12 8 8 11Z" fill="#555" /></Icon>
                  </Seg>
                </Segments>
              </PropRow>
              <PropRow $off>
                <PropLabel>End:</PropLabel>
                <DisabledSelect $w={43} $fill $ml={1}><Caret $dim /></DisabledSelect>
                <DisabledSelect $w={63} $ml={6}><Caret $dim /></DisabledSelect>
                <Slot $ml={127} $w={16} $h={16}>
                  <Icon s={14}><circle cx="7" cy="7" r="5" stroke="#6a6a6a" strokeWidth="1.2" strokeDasharray="12 3" /></Icon>
                </Slot>
              </PropRow>
              <Separator $mt={11} $mb={12} />
              <PressureRow>
                <PropertiesBtn>Properties...</PropertiesBtn>
                <CtxLabel $w={50} $ml={6} $small>Pressure:</CtxLabel>
                <PressureBar />
              </PressureRow>
            </StrokeBody>

            <LayersPanel>
              <TabStrip>
                <Grip />
                <Tab $active $w={40}>Layers</Tab>
                <Tab $w={42}>Effects</Tab>
                <Tab $w={38}>Styles</Tab>
                <Tab $w={60}>Text Styles</Tab>
                <MenuGlyph>
                  <Icon s={14} h={14}>
                    <path d="M1 3.5H12M1 6.5H12M1 9.5H12" stroke="#ddd" />
                    <rect x="12" y="11" width="1.5" height="1.5" fill="#ddd" />
                  </Icon>
                </MenuGlyph>
              </TabStrip>
              <OpacityBand>
                <CtxLabel $w={40} $small>Opacity:</CtxLabel>
                <Combo $w={75}><span>100 %</span><Caret /></Combo>
                <Combo $w={144} $ml={4}><span>Normal</span><Caret /></Combo>
                <FooterIcon $ml={4}><Gear c="#b0b0b0" /></FooterIcon>
                <FooterIcon $ml={6}>
                  <Icon s={14}>
                    <path d="M4 6V4Q4 1.5 7 1.5 10 1.5 10 4V6" stroke="#b0b0b0" strokeWidth="1.5" />
                    <rect x="2.5" y="6" width="9" height="7.5" rx="1" fill="#b0b0b0" />
                  </Icon>
                </FooterIcon>
              </OpacityBand>
              <LayerRow>
                <LayerThumb />
                <LayerName>(Rectangle)</LayerName>
                <LayerVisible>
                  <Icon s={14}>
                    <rect x="1.5" y="1.5" width="11" height="11" rx="1" stroke="#a7bbdb" />
                    <path d="M3.5 7 6 10 10.5 3" stroke="#a7bbdb" strokeWidth="1.2" />
                  </Icon>
                </LayerVisible>
              </LayerRow>
              <LayerGap />
              <LayerFooter>
                <StackBtn>
                  <Icon s={18}>
                    <path d="M9 2 17 6 9 10 1 6Z" fill="#b5b5b5" />
                    <path d="M1 9 9 13 17 9M1 12 9 16 17 12" stroke="#b5b5b5" strokeWidth="1.5" />
                  </Icon>
                </StackBtn>
                <FooterIcon $ml={122}>
                  <Icon s={14}><rect width="14" height="11" y="1.5" fill="#a8a8a8" /><circle cx="7" cy="7" r="4" fill="#333" /></Icon>
                </FooterIcon>
                <FooterIcon $ml={6}>
                  <Icon s={14}>
                    <circle cx="7" cy="7" r="6" fill="#444" stroke="#999" />
                    <path d="M7 1A6 6 0 0 0 7 13Z" transform="rotate(30 7 7)" fill="#999" />
                  </Icon>
                </FooterIcon>
                <FooterIcon $ml={6}><FxMark>fx</FxMark></FooterIcon>
                <FooterIcon $ml={46}>
                  <Icon s={14}><path d="M2.5 1H8L11.5 4.5V13H2.5ZM8 1V5H11.5" stroke="#bdbdbd" /></Icon>
                </FooterIcon>
                <FooterIcon $ml={6}>
                  <svg width="12" height="12" viewBox="0 0 12 12" style={{ display: "block" }}>
                    <rect width="12" height="12" fill="#ccc" />
                    {[0, 3, 6, 9].flatMap((y) =>
                      [0, 3, 6, 9].map((x) =>
                        (x + y) % 6 === 0 ? <rect key={`${x}${y}`} x={x} y={y} width="3" height="3" fill="#444" /> : null
                      )
                    )}
                  </svg>
                </FooterIcon>
                <FooterIcon $ml={6}>
                  <Icon s={14}>
                    <path d="M1 3H13M5 3V1H9V3M2.5 3.5V13H11.5V3.5" stroke="#bdbdbd" />
                    <path d="M5 5V12M7 5V12M9 5V12" stroke="#bdbdbd" />
                  </Icon>
                </FooterIcon>
              </LayerFooter>
            </LayersPanel>

            <TabStrip>
              <Grip />
              <Tab $active $w={58}>Transform</Tab>
              <Tab $w={46}>History</Tab>
              <Tab $w={50}>Navigator</Tab>
            </TabStrip>
            <TransformBody>
              <AnchorWrap><AnchorGrid /></AnchorWrap>
              <TransformGrid>
                <AxisLabel>X:</AxisLabel><AxisField>2.316 in</AxisField>
                <AxisLabel>W:</AxisLabel><AxisField>2 in</AxisField>
                <AxisLabel>Y:</AxisLabel><AxisField>1.754 in</AxisField>
                <AxisLabel>H:</AxisLabel><AxisField>2 in</AxisField>
                <AxisLabel $gapTop>R:</AxisLabel><AxisField $gapTop>0 °<Caret /></AxisField>
                <AxisLabel $gapTop>S:</AxisLabel><AxisField $gapTop>0 °<Caret /></AxisField>
              </TransformGrid>
              <LinkWrap $mt={15} $ml={5}><ChainIcon c="#999" /></LinkWrap>
            </TransformBody>
          </RightDock>
        </Body>

        <StatusBar>
          'Rectangle' selected. <b>Drag</b> to move selection. <b>Click</b> another object to select it. <b>Click</b> on an empty area to deselect selection.
        </StatusBar>
      </Frame>
    </Screen>
  );
}
